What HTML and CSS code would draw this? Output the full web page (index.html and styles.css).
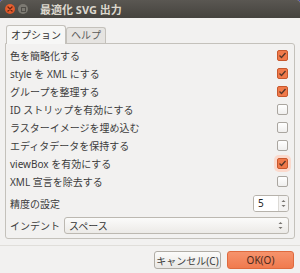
FILE: index.html
```html
<!DOCTYPE html>
<html lang="ja">
  <head>
    <meta charset="UTF-8" />
    <title>最適化 SVG 出力</title>
    <link rel="stylesheet" href="styles.css">
  </head>
  <body>
    <div class="window">
      <header class="titlebar">
        <span class="wbtn close">
          <svg width="10" height="10" viewBox="0 0 10 10"><path d="M3 3 L7 7 M7 3 L3 7" stroke="#6a2410" stroke-width="1.4" stroke-linecap="round"/></svg>
        </span>
        <span class="wbtn mini"><i></i></span>
        <span class="title">最適化 SVG 出力</span>
      </header>

      <main class="content">
        <div class="tabs">
          <span class="tab active">オプション</span>
          <span class="tab">ヘルプ</span>
        </div>

        <section class="panel">
          <div class="row"><span>色を簡略化する</span><span class="check on"></span></div>
          <div class="row"><span>style を XML にする</span><span class="check on"></span></div>
          <div class="row"><span>グループを整理する</span><span class="check on"></span></div>
          <div class="row"><span>ID ストリップを有効にする</span><span class="check"></span></div>
          <div class="row"><span>ラスターイメージを埋め込む</span><span class="check"></span></div>
          <div class="row"><span>エディタデータを保持する</span><span class="check"></span></div>
          <div class="row"><span>viewBox を有効にする</span><span class="check on hover"></span></div>
          <div class="row"><span>XML 宣言を除去する</span><span class="check"></span></div>

          <div class="row spin-row">
            <span>精度の設定</span>
            <span class="spin">
              <span class="spin-value">5</span>
              <span class="arrows">
                <svg width="5" height="9" viewBox="0 0 5 9"><path d="M0.5 3 L2.5 1 L4.5 3 Z M0.5 6 L2.5 8 L4.5 6 Z" fill="#77746f"/></svg>
              </span>
            </span>
          </div>

          <div class="row combo-row">
            <span class="label">インデント</span>
            <span class="combo">
              <span>スペース</span>
              <span class="arrows">
                <svg width="5" height="9" viewBox="0 0 5 9"><path d="M0.5 3 L2.5 1 L4.5 3 Z M0.5 6 L2.5 8 L4.5 6 Z" fill="#77746f"/></svg>
              </span>
            </span>
          </div>
        </section>
      </main>

      <footer class="actions">
        <button class="btn">キャンセル(C)</button>
        <button class="btn ok">OK(O)</button>
      </footer>
    </div>
  </body>
</html>
```

FILE: styles.css
```css
* {
  margin: 0;
  padding: 0;
  box-sizing: border-box;
}

body {
  background-color: #2f34c4;
  font-family: "Noto Sans", "Noto Sans CJK JP", sans-serif;
  font-size: 10px;
  color: #3c3c3c;
}

.window {
  width: 300px;
  height: 273px;
  background-color: #f2f1f0;
  border-radius: 3px 3px 0 0;
  overflow: hidden;
  display: flex;
  flex-direction: column;
}

.titlebar {
  height: 18px;
  background: linear-gradient(#5a5752, #45433e);
  display: flex;
  align-items: center;
  padding-left: 5px;
  gap: 3px;
}

.wbtn {
  width: 10px;
  height: 10px;
  border-radius: 50%;
  display: flex;
  align-items: center;
  justify-content: center;
}

.close {
  background: radial-gradient(circle at 50% 40%, #f26d3d, #d2491c);
}

.mini {
  background: #7c7972;
}

.mini i {
  width: 5px;
  height: 5px;
  border: 1px solid #4f4d48;
}

.title {
  color: #dcd8ce;
  font-weight: bold;
  font-size: 11px;
  margin-left: 9px;
}

.content {
  padding: 6px 5px 0 5px;
}

.tabs {
  display: flex;
  align-items: flex-end;
  height: 19px;
  padding-left: 1px;
}

.tab {
  height: 16px;
  padding: 0 4px;
  border: 1px solid #c4c1bb;
  border-bottom: none;
  border-radius: 3px 3px 0 0;
  background: #e6e4e1;
  color: #5a5a5a;
  line-height: 15px;
}

.tab.active {
  height: 19px;
  background: #f7f7f6;
  color: #333;
  line-height: 18px;
  margin-bottom: -1px;
  position: relative;
}

.panel {
  height: 196px;
  border: 1px solid #c4c1bb;
  border-radius: 0 3px 3px 3px;
  padding: 2px 5px 0 4px;
  display: flex;
  flex-direction: column;
}

.row {
  height: 18px;
  display: flex;
  align-items: center;
  justify-content: space-between;
  white-space: nowrap;
}

.check {
  width: 11px;
  height: 11px;
  border: 1px solid #aaa6a0;
  border-radius: 2px;
  background: linear-gradient(#fff, #f0efee);
  margin-right: 1px;
}

.check.on {
  border-color: #c8582d;
  background: #f07a4a url("data:image/svg+xml;utf8,<svg xmlns='http://www.w3.org/2000/svg' width='9' height='9'><path d='M1.5 4.5 L3.5 6.5 L7.5 2' fill='none' stroke='%23553629' stroke-width='1.3'/></svg>") center no-repeat;
}

.check.hover {
  box-shadow: 0 0 0 3px #fbd9cc;
}

.spin-row {
  height: 24px;
  margin-top: 1px;
}

.spin {
  display: flex;
  height: 17px;
  width: 36px;
  border: 1px solid #b6b2ab;
  border-radius: 3px;
  overflow: hidden;
}

.spin-value {
  flex: 1;
  background: #fff;
  padding-left: 4px;
  line-height: 15px;
  color: #222;
  border-right: 1px solid #dcdad6;
}

.arrows {
  width: 9px;
  display: flex;
  align-items: center;
  justify-content: center;
  background: #f4f3f2;
}

.combo-row {
  height: 20px;
  gap: 4px;
}

.combo {
  flex: 1;
  height: 17px;
  border: 1px solid #bcb8b1;
  border-radius: 3px;
  background: linear-gradient(#fbfbfa, #eceae7);
  display: flex;
  align-items: center;
  justify-content: space-between;
  padding-left: 4px;
  color: #333;
}

.combo .arrows {
  background: none;
  margin-right: 3px;
}

.actions {
  margin-top: 6px;
  border-top: 1px solid #e0deda;
  display: flex;
  justify-content: flex-end;
  gap: 6px;
  padding: 5px 6px 0 0;
}

.btn {
  font-family: inherit;
  font-size: 10px;
  height: 18px;
  border: 1px solid #b0aca5;
  border-radius: 3px;
  background: linear-gradient(#fbfbfa, #e9e7e4);
  color: #3c3c3c;
  width: 67px;
}

.btn.ok {
  border-color: #df6a3e;
  background: linear-gradient(#f6936c, #f07a4e);
  color: #4a2a1e;
}
```
